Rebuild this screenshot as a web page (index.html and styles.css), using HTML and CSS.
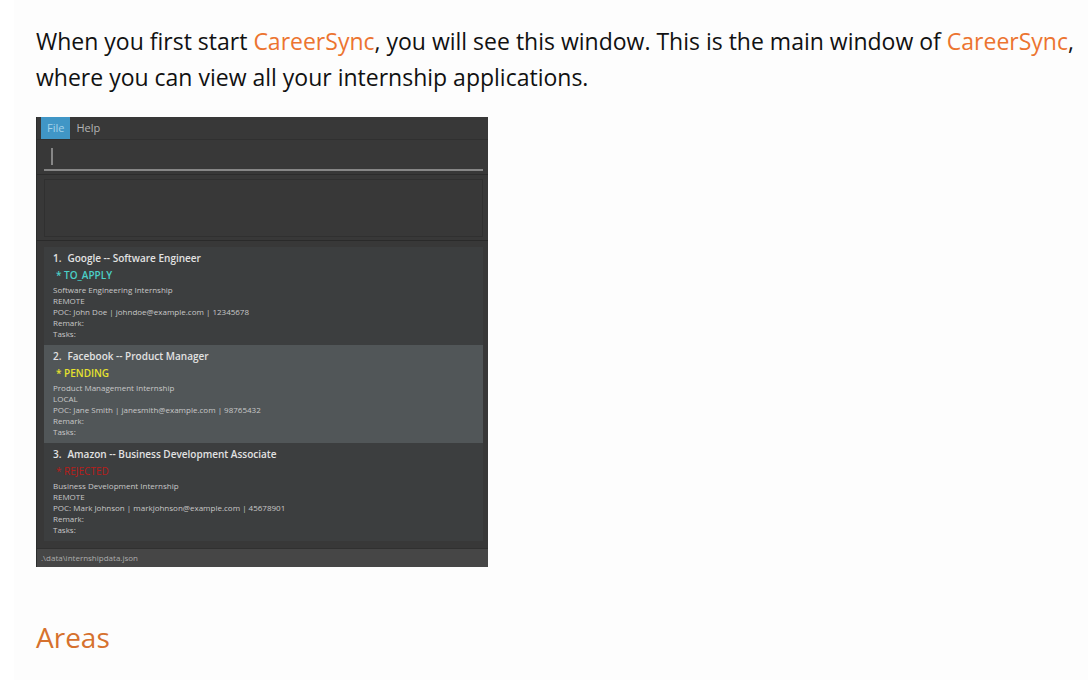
FILE: index.html
```
<!DOCTYPE html>
<html lang="en">
<head>
<meta charset="utf-8">
<title>CareerSync User Guide</title>
<link rel="stylesheet" href="styles.css">
</head>
<body>
<main class="page">
  <p class="intro">When you first start <span class="brand">CareerSync</span>, you will see this window. This is the main window of <span class="brand">CareerSync</span>, where you can view all your internship applications.</p>

  <section class="app" aria-label="CareerSync main window">
    <nav class="menubar">
      <button class="menu menu-active" type="button">File</button>
      <button class="menu" type="button">Help</button>
    </nav>
    <div class="command">
      <input class="command-input" type="text" aria-label="Command">
      <span class="caret"></span>
    </div>
    <div class="result">
      <textarea class="result-box" aria-label="Result" readonly></textarea>
    </div>
    <ol class="list">
      <li class="card">
        <h3 class="card-title"><span class="index">1.</span>Google -- Software Engineer</h3>
        <p class="status to-apply">* TO_APPLY</p>
        <p class="line">Software Engineering Internship</p>
        <p class="line">REMOTE</p>
        <p class="line">POC: John Doe | johndoe@example.com | 12345678</p>
        <p class="line">Remark:</p>
        <p class="line">Tasks:</p>
      </li>
      <li class="card card-alt">
        <h3 class="card-title"><span class="index">2.</span>Facebook -- Product Manager</h3>
        <p class="status pending">* PENDING</p>
        <p class="line">Product Management Internship</p>
        <p class="line">LOCAL</p>
        <p class="line">POC: Jane Smith | janesmith@example.com | 98765432</p>
        <p class="line">Remark:</p>
        <p class="line">Tasks:</p>
      </li>
      <li class="card">
        <h3 class="card-title"><span class="index">3.</span>Amazon -- Business Development Associate</h3>
        <p class="status rejected">* REJECTED</p>
        <p class="line">Business Development Internship</p>
        <p class="line">REMOTE</p>
        <p class="line">POC: Mark Johnson | markjohnson@example.com | 45678901</p>
        <p class="line">Remark:</p>
        <p class="line">Tasks:</p>
      </li>
    </ol>
    <footer class="statusbar">.\data\internshipdata.json</footer>
  </section>

  <h2 class="heading">Areas</h2>
</main>
</body>
</html>
```
FILE: styles.css
```
* {
  box-sizing: border-box;
}

body {
  margin: 0;
  padding-left: 14px;
  background: #fff;
  font-family: "Open Sans", "Noto Sans", sans-serif;
}

.page {
  min-height: 100vh;
  padding: 23px 12px 16px 22px;
  background: #fdfdfd;
  color: #111;
}

.intro {
  margin: 0 0 22px;
  font-size: 23px;
  line-height: 36px;
}

.brand {
  color: #ec7430;
}

.app {
  width: 100%;
  max-width: 452px;
  background: #383838;
  border-left: 1px solid #2b2d2d;
  color: #c8c8c8;
}

.menubar {
  display: flex;
  padding-left: 4px;
  border-bottom: 1px solid #303030;
}

.menu {
  padding: 0 6px;
  border: 0;
  background: none;
  color: #b4b4b4;
  font-family: inherit;
  font-size: 11px;
  line-height: 22px;
}

.menu-active {
  background: #4096c6;
  color: #a5d3ea;
}

.command {
  position: relative;
  padding: 0 5px 3px 7px;
  border-bottom: 1px solid #2c2c2c;
}

.command-input {
  display: block;
  width: 100%;
  height: 31px;
  padding: 0 6px;
  border: 0;
  border-bottom: 2px solid #868686;
  outline: 0;
  background: none;
  color: #ddd;
  font-family: inherit;
  font-size: 12px;
}

.caret {
  position: absolute;
  left: 14px;
  top: 8px;
  width: 2px;
  height: 17px;
  background: #868686;
}

.result {
  padding: 4px 5px 3px 7px;
  border-bottom: 1px solid #2a2a2a;
}

.result-box {
  display: block;
  width: 100%;
  height: 58px;
  border: 1px solid #303030;
  outline: 0;
  background: #383838;
  color: #ddd;
  font-family: inherit;
  resize: none;
}

.list {
  margin: 0;
  padding: 6px 5px 7px 7px;
  list-style: none;
}

.card {
  padding: 3px 9px 6px;
  background: #3c3e3f;
}

.card-alt {
  background: #515658;
}

.card-title,
.status,
.line {
  margin: 0;
}

.card-title {
  color: #e2e2e2;
  font-size: 10px;
  font-weight: 600;
  line-height: 17px;
}

.index {
  margin-right: 6px;
}

.status {
  padding-left: 3px;
  font-size: 10px;
  font-weight: 600;
  line-height: 17px;
}

.to-apply {
  color: #4bd0c8;
}

.pending {
  color: #e6e12e;
}

.rejected {
  color: #b81d1a;
  font-weight: 400;
}

.line {
  font-size: 8px;
  line-height: 11px;
}

.statusbar {
  padding-left: 4px;
  border-top: 1px solid #303030;
  background: #464646;
  color: #acacac;
  font-size: 8px;
  line-height: 18px;
}

.heading {
  margin: 50px 0 0;
  color: #d6712e;
  font-size: 28px;
  font-weight: 400;
  line-height: 40px;
}
```
